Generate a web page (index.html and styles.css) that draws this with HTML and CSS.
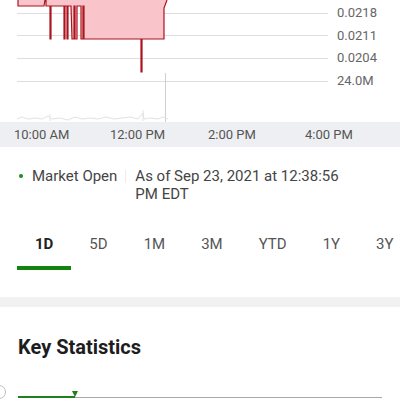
FILE: index.html
```html
<!DOCTYPE html>
<html>
<head>
    <title>Quote 1D</title>
    <link rel="stylesheet" href="styles.css">
</head>
<body>
    <div class="chart">
        <svg class="plot" width="330" height="122" viewBox="0 0 330 122">
            <g class="grid">
                <line x1="17" y1="13.5" x2="328" y2="13.5"/>
                <line x1="17" y1="35.5" x2="328" y2="35.5"/>
                <line x1="17" y1="58.5" x2="328" y2="58.5"/>
                <line x1="17" y1="81.5" x2="328" y2="81.5"/>
            </g>
            <path class="area" d="M18,0 V6 H44 L45,0 H46 V6 H50 V39 H51 V6 H64 V39 H65 V6 H67 V39 H68 V6 H71 L72,39 H74 V6 H75 V39 H77 V6 H81 V39 H83 V6 H84 V39 H141 V72 H142 V39 H164 V8 L167,0 Z"/>
            <path class="price" d="M18,0 V6 H44 L45,0 H46 V6 H50 V39 H51 V6 H64 V39 H65 V6 H67 V39 H68 V6 H71 L72,39 H74 V6 H75 V39 H77 V6 H81 V39 H83 V6 H84 V39 H141 V72 H142 V39 H164 V8 L167,0"/>
            <line class="now" x1="165.5" y1="73" x2="165.5" y2="122"/>
            <path class="volume" d="M17,119 L22,117 L28,119 L35,118 L42,119 L48,116 L52,119 L60,118 L68,120 L75,117 L82,119 L90,118 L98,119 L106,117 L114,119 L122,118 L130,117 L138,119 L143,113 L144,119 L150,118 L158,119 L163,117 L168,119 M50,121 V114 M143,121 V110"/>
        </svg>
        <div class="y-axis">
            <span>0.0218</span>
            <span>0.0211</span>
            <span>0.0204</span>
            <span>24.0M</span>
        </div>
    </div>

    <div class="time-axis">
        <span>10:00 AM</span>
        <span>12:00 PM</span>
        <span>2:00 PM</span>
        <span>4:00 PM</span>
    </div>

    <div class="status">
        <span class="dot"></span>
        <span class="market">Market Open</span>
        <span class="sep"></span>
        <span class="asof">As of Sep 23, 2021 at 12:38:56 PM EDT</span>
    </div>

    <div class="tabs">
        <div class="tab active">1D</div>
        <div class="tab">5D</div>
        <div class="tab">1M</div>
        <div class="tab">3M</div>
        <div class="tab">YTD</div>
        <div class="tab">1Y</div>
        <div class="tab">3Y</div>
    </div>

    <div class="divider"></div>

    <h2 class="section-title">Key Statistics</h2>

    <div class="range-row">
        <span class="info"></span>
        <div class="range">
            <div class="range-fill"></div>
            <span class="marker"></span>
        </div>
    </div>
</body>
</html>
```
FILE: styles.css
```css
html, body {
    margin: 0;
    padding: 0;
    overflow: hidden;
    background: #fff;
}
body {
    width: 400px;
    height: 400px;
    font-family: Roboto, "Liberation Sans", Arial, sans-serif;
    color: #444;
}
.chart {
    display: flex;
    height: 122px;
}
.plot {
    display: block;
    flex: none;
}
.grid line {
    stroke: #dedede;
    stroke-width: 1;
}
.area {
    fill: #f9c5cb;
}
.price {
    fill: none;
    stroke: #ab141e;
    stroke-width: 1.2;
}
.now {
    stroke: #cfcfcf;
    stroke-width: 1;
}
.volume {
    fill: none;
    stroke: #e2e2e2;
    stroke-width: 1;
}
.y-axis {
    display: flex;
    flex-direction: column;
    padding: 2px 0 0 7px;
    font-size: 13px;
    line-height: 22.6px;
    color: #666;
}
.time-axis {
    display: grid;
    grid-template-columns: 96px 98px 97px 97px;
    align-items: center;
    height: 25px;
    padding-left: 14px;
    background: #eeeff2;
    font-size: 13px;
    color: #555;
}
.status {
    display: flex;
    align-items: flex-start;
    padding: 20px 18px 0 18px;
    font-size: 15px;
    line-height: 18px;
    color: #444;
}
.dot {
    width: 4px;
    height: 4px;
    border-radius: 50%;
    background: #1f8a1f;
    margin: 7px 9px 0 1px;
    flex: none;
}
.market {
    flex: none;
}
.sep {
    width: 1px;
    height: 13px;
    background: #ececec;
    margin: 3px 9px 0 8px;
    flex: none;
}
.asof {
    width: 215px;
}
.tabs {
    display: flex;
    margin-top: 31px;
    padding-left: 17px;
    white-space: nowrap;
}
.tab {
    padding: 0 18px 12px 18px;
    font-size: 15px;
    line-height: 20px;
    color: #555;
    border-bottom: 4px solid transparent;
}
.tab.active {
    font-weight: bold;
    color: #222;
    border-bottom-color: #13820f;
}
.divider {
    height: 10px;
    margin-top: 27px;
    background: #f1f1f1;
}
.section-title {
    margin: 28px 0 0 18px;
    font-size: 20px;
    line-height: 24px;
    font-weight: bold;
    color: #1d1d1d;
}
.range-row {
    display: flex;
    align-items: flex-end;
    margin-top: 26px;
}
.info {
    width: 12px;
    height: 12px;
    border: 1px solid #bbb;
    border-radius: 50%;
    margin-left: -8px;
    flex: none;
}
.range {
    position: relative;
    width: 364px;
    height: 1px;
    margin-left: 12px;
    margin-bottom: 1px;
    background: #a8a8a8;
}
.range-fill {
    width: 57px;
    height: 2px;
    margin-top: -1px;
    background: #1e7f1e;
}
.marker {
    position: absolute;
    left: 54px;
    top: -6px;
    width: 0;
    height: 0;
    border-left: 3.5px solid transparent;
    border-right: 3.5px solid transparent;
    border-top: 6px solid #1e7f1e;
}
```
